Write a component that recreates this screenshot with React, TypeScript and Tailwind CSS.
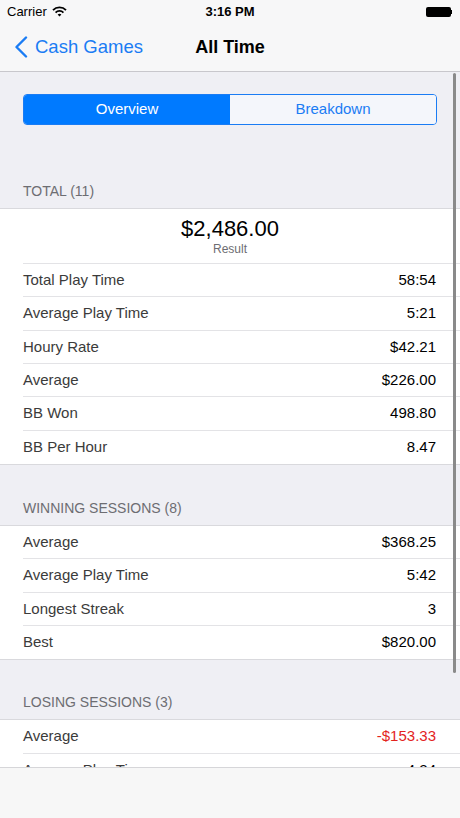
const font = "font-['Liberation_Sans',Arial,sans-serif]";

type Row = { label: string; value: string; negative?: boolean };

const totalRows: Row[] = [
    { label: "Total Play Time", value: "58:54" },
    { label: "Average Play Time", value: "5:21" },
    { label: "Houry Rate", value: "$42.21" },
    { label: "Average", value: "$226.00" },
    { label: "BB Won", value: "498.80" },
    { label: "BB Per Hour", value: "8.47" },
];

const winningRows: Row[] = [
    { label: "Average", value: "$368.25" },
    { label: "Average Play Time", value: "5:42" },
    { label: "Longest Streak", value: "3" },
    { label: "Best", value: "$820.00" },
];

const losingRows: Row[] = [
    { label: "Average", value: "-$153.33", negative: true },
    { label: "Average Play Time", value: "4:24" },
    { label: "Longest Streak", value: "2" },
];

const StatRow = ({ label, value, negative, last }: Row & { last?: boolean }) => (
    <div className="pl-[23px] shrink-0">
        <div className={`flex items-center justify-between h-[33.33px] pr-[24px] ${last ? "" : "border-b border-[#e3e3e6]"}`}>
            <span className="text-[15px] text-[#3b3b3b]">{label}</span>
            <span className={`text-[15px] ${negative ? "text-[#e3231e]" : "text-black"}`}>{value}</span>
        </div>
    </div>
);

const SectionHeader = ({ title, height }: { title: string; height: string }) => (
    <div className={`flex items-end pl-[23px] pb-[8px] shrink-0 ${height}`}>
        <span className="text-[14px] text-[#6d6d72] leading-[17px]">{title}</span>
    </div>
);

const App = () => {
    return (
        <div className={`relative flex flex-col w-[460px] h-[818px] overflow-hidden bg-[#efeff4] ${font}`}>
            {/* status bar + nav */}
            <div className="shrink-0 bg-[#f7f7f8] border-b border-[#c8c7cc]">
                <div className="relative flex items-center h-[20px] pt-[3px] px-[7px] text-[13px] text-black">
                    <span>Carrier</span>
                    <svg width="15" height="11" viewBox="0 0 15 11" className="ml-[5px]">
                        <path d="M1 4.2 A9 9 0 0 1 14 4.2" stroke="black" strokeWidth="1.8" fill="none" />
                        <path d="M3.6 6.6 A5.4 5.4 0 0 1 11.4 6.6" stroke="black" strokeWidth="1.8" fill="none" />
                        <path d="M7.5 10.5 L5.6 8.6 A2.7 2.7 0 0 1 9.4 8.6 Z" fill="black" />
                    </svg>
                    <span className="absolute left-1/2 -translate-x-1/2 font-bold">3:16 PM</span>
                    <div className="ml-auto flex items-center mr-[1px]">
                        <div className="w-[25px] h-[10px] bg-black rounded-[2px]" />
                        <div className="w-[1.5px] h-[4px] bg-black" />
                    </div>
                </div>
                <div className="relative flex items-center h-[51px] pt-[3px]">
                    <div className="flex items-center pl-[14px] text-[#1a7cf4]">
                        <svg width="14" height="22" viewBox="0 0 14 22">
                            <path d="M12 1.5 L2.5 11 L12 20.5" stroke="#1a7cf4" strokeWidth="2.4" fill="none" strokeLinecap="round" strokeLinejoin="round" />
                        </svg>
                        <span className="ml-[7px] text-[18.5px]">Cash Games</span>
                    </div>
                    <span className="absolute left-1/2 -translate-x-1/2 text-[18px] font-bold text-black">All Time</span>
                </div>
            </div>

            {/* scrolling content */}
            <div className="flex flex-col flex-1 overflow-hidden">
                <div className="shrink-0 px-[23px] pt-[22px]">
                    <div className="flex h-[31px] rounded-[4px] border border-[#1a7cf4] overflow-hidden text-[15px]">
                        <div className="flex-1 flex items-center justify-center bg-[#007aff] text-white">Overview</div>
                        <div className="flex-1 flex items-center justify-center bg-[#f4f6fb] text-[#1a7cf4]">Breakdown</div>
                    </div>
                </div>

                <SectionHeader title="TOTAL (11)" height="h-[83px]" />
                <div className="shrink-0 bg-white border-y border-[#d9d9dd]">
                    <div className="pl-[23px]">
                        <div className="flex flex-col items-center justify-center h-[55px] border-b border-[#e3e3e6] pr-[23px]">
                            <span className="text-[22px] text-black leading-[26px]">$2,486.00</span>
                            <span className="text-[12px] text-[#6d6d72] leading-[14px]">Result</span>
                        </div>
                    </div>
                    {totalRows.map((r, i) => (
                        <StatRow key={r.label} {...r} last={i === totalRows.length - 1} />
                    ))}
                </div>

                <SectionHeader title="WINNING SESSIONS (8)" height="h-[60px]" />
                <div className="shrink-0 bg-white border-y border-[#d9d9dd]">
                    {winningRows.map((r, i) => (
                        <StatRow key={r.label} {...r} last={i === winningRows.length - 1} />
                    ))}
                </div>

                <SectionHeader title="LOSING SESSIONS (3)" height="h-[59px]" />
                <div className="shrink-0 bg-white border-y border-[#d9d9dd]">
                    {losingRows.map((r, i) => (
                        <StatRow key={r.label + i} {...r} last={i === losingRows.length - 1} />
                    ))}
                </div>
            </div>

            {/* toolbar */}
            <div className="shrink-0 h-[51px] bg-[#f7f7f7] border-t border-[#d6d6d9]" />

            {/* scroll indicator */}
            <div className="absolute right-[4px] top-[73px] w-[3px] h-[600px] rounded-full bg-[#8a8a8a]" />
        </div>
    );
};

export default App;
